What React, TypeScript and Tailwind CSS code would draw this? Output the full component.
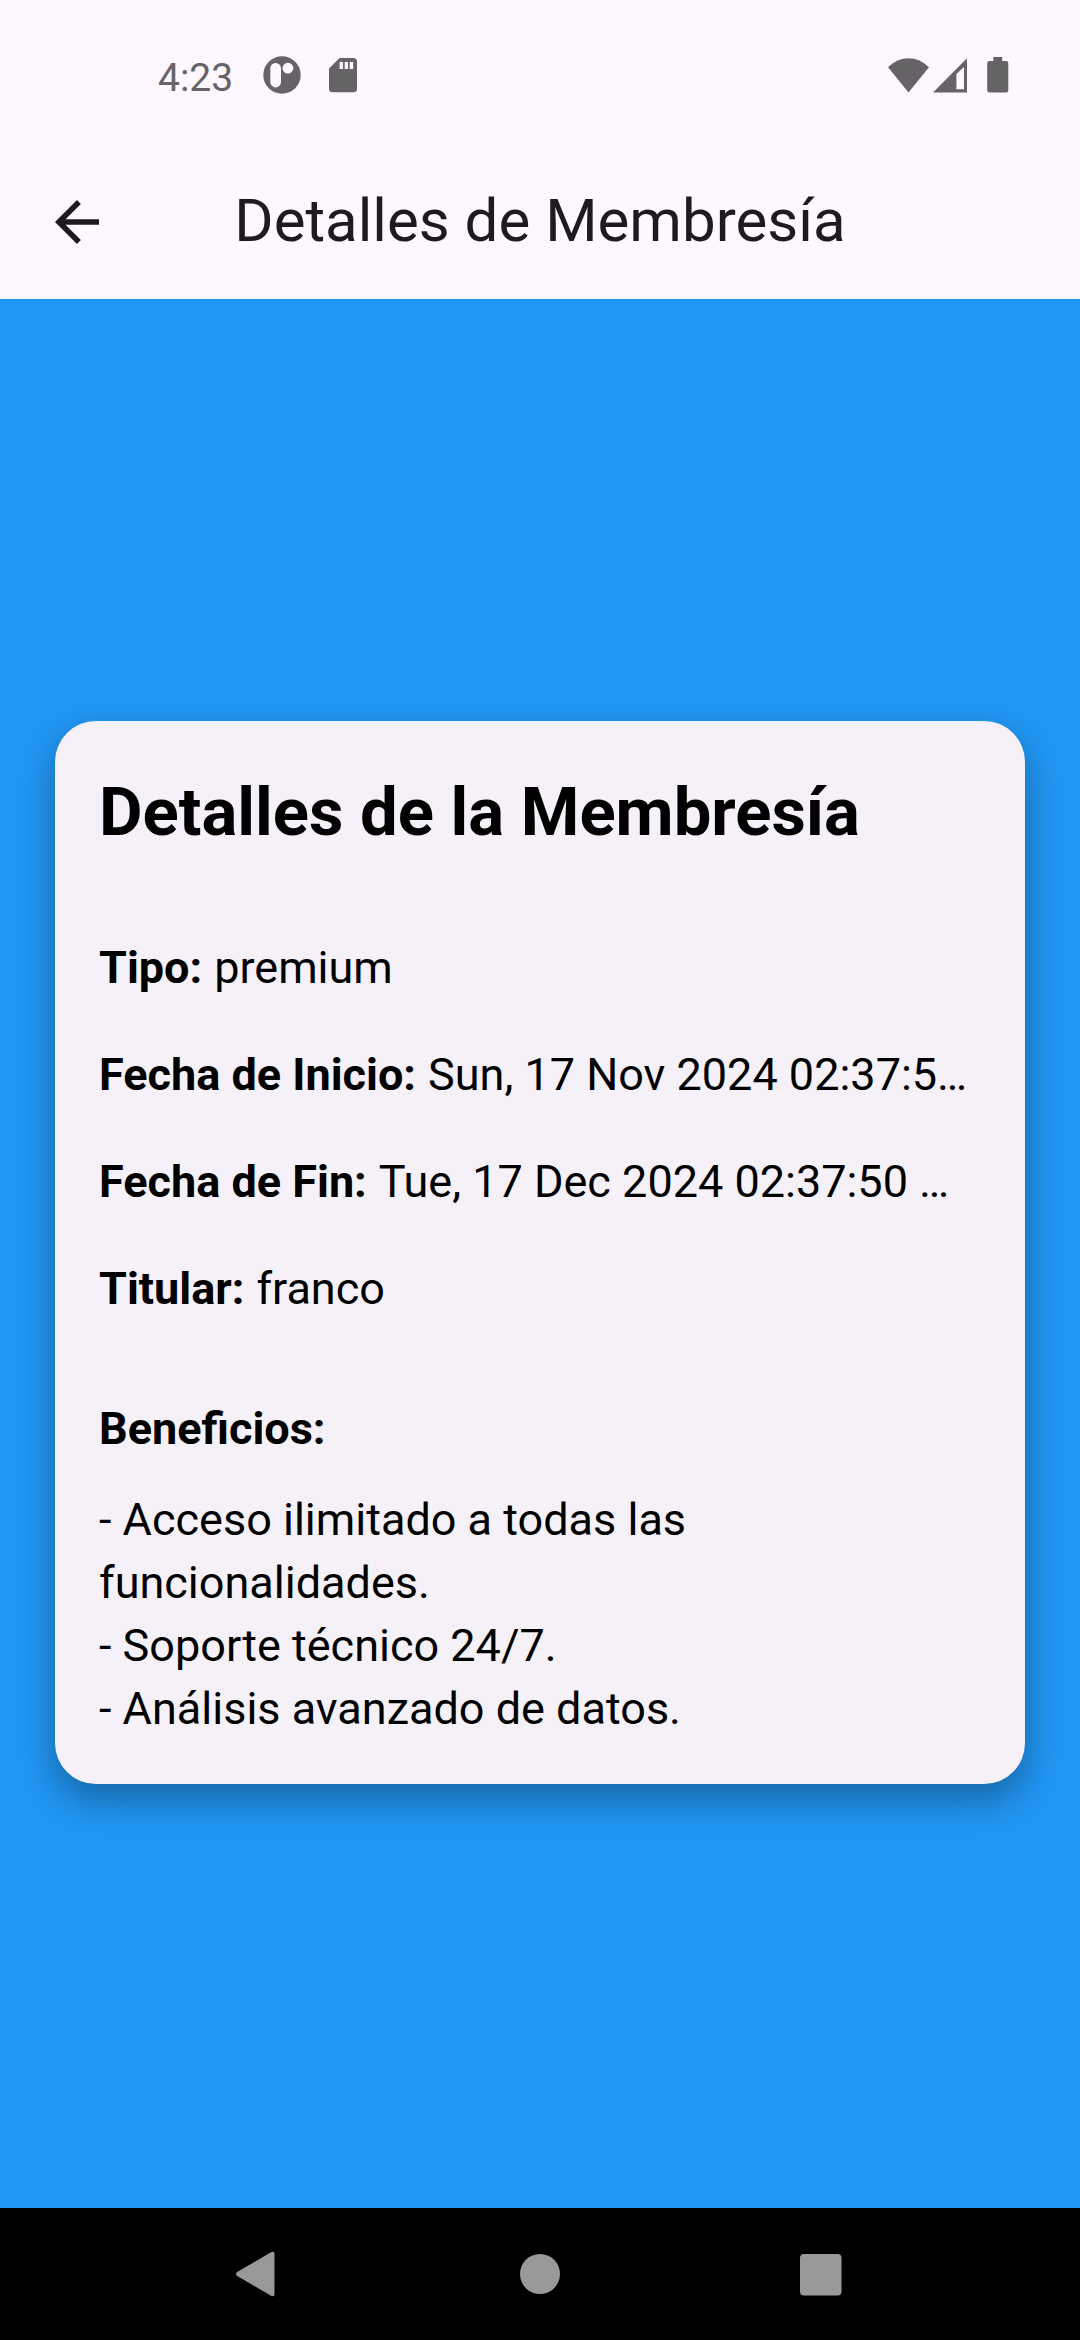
import type { ReactNode } from "react";

const details = [
  { label: "Tipo:", value: "premium" },
  { label: "Fecha de Inicio:", value: "Sun, 17 Nov 2024 02:37:5…" },
  { label: "Fecha de Fin:", value: "Tue, 17 Dec 2024 02:37:50 …" },
  { label: "Titular:", value: "franco" },
];

const benefits = [
  "- Acceso ilimitado a todas las funcionalidades.",
  "- Soporte técnico 24/7.",
  "- Análisis avanzado de datos.",
];

function StatusBar() {
  return (
    <div className="flex h-[145px] items-center justify-between pt-[11px] pr-[71px] pl-[158px] text-[#666367]">
      <div className="flex items-center">
        <span className="text-[39px] leading-none">4:23</span>
        <svg className="ml-[30px] h-11 w-[38px]" viewBox="0 0 38 44" aria-hidden="true">
          <circle cx="19" cy="19" r="18.7" fill="currentColor" />
          <rect x="7.3" y="7" width="10.7" height="24.4" rx="5.3" fill="#fef7ff" />
          <circle cx="24.9" cy="12.2" r="5.4" fill="#fef7ff" />
        </svg>
        <svg className="ml-7 h-11 w-7" viewBox="0 0 28 44" aria-hidden="true">
          <path
            fill="currentColor"
            fillRule="evenodd"
            d="M10.6 2H24.5Q28 2 28 5.5V33Q28 36.3 24.5 36.3H3.5Q0 36.3 0 33V12.6ZM10.6 6V13H14V6ZM15.7 6V13H19V6ZM20.7 6V13H24.2V6Z"
          />
        </svg>
      </div>
      <div className="flex items-center">
        <svg className="h-11 w-[42px]" viewBox="0 0 42 44" aria-hidden="true">
          <path fill="currentColor" d="M0 11.2Q9 2.2 20.5 2.2T41 11.2L20.5 36.5Z" />
        </svg>
        <svg className="ml-[3px] h-11 w-[34px]" viewBox="0 0 34 44" aria-hidden="true">
          <path fill="currentColor" fillRule="evenodd" d="M34 2.3V36.6H0ZM31 11L23.4 18V33.3H31Z" />
        </svg>
        <svg className="ml-5 h-11 w-[22px]" viewBox="0 0 22 44" aria-hidden="true">
          <path
            fill="currentColor"
            d="M6.3 1H15.2V5H19Q21.3 5 21.3 7.3V34.2Q21.3 36.5 19 36.5H2.5Q.2 36.5 .2 34.2V7.3Q.2 5 2.5 5H6.3Z"
          />
        </svg>
      </div>
    </div>
  );
}

function AppBar() {
  return (
    <div className="flex h-[154px] items-center text-[#1d1b20]">
      <button type="button" aria-label="Atrás" className="flex h-full w-[154px] items-center justify-center">
        <svg className="size-[66px]" viewBox="0 0 24 24" fill="currentColor" aria-hidden="true">
          <path d="M20 11H7.83l5.59-5.59L12 4l-8 8 8 8 1.41-1.41L7.83 13H20v-2z" />
        </svg>
      </button>
      <h1 className="flex-1 pr-[154px] pb-[3px] text-center text-[60px] leading-[76px]">Detalles de Membresía</h1>
    </div>
  );
}

function NavButton({ label, children }: { label: string; children: ReactNode }) {
  return (
    <button type="button" aria-label={label} className="flex h-full w-[26%] items-center justify-center">
      <svg className="size-12" viewBox="0 0 48 48" fill="#999999" aria-hidden="true">
        {children}
      </svg>
    </button>
  );
}

function NavigationBar() {
  return (
    <nav className="flex h-[132px] justify-center bg-black">
      <NavButton label="Volver">
        <path d="M2.2 22L36 2.3Q39.5 .8 39.5 4V44Q39.5 47.2 36 45.7L2.2 26Q-.2 24 2.2 22Z" />
      </NavButton>
      <NavButton label="Inicio">
        <circle cx="24" cy="24" r="20" />
      </NavButton>
      <NavButton label="Aplicaciones recientes">
        <rect x="3" y="4" width="41.5" height="41.5" rx="4" />
      </NavButton>
    </nav>
  );
}

export default function App() {
  return (
    <div className="flex min-h-screen flex-col bg-[#2196f3] font-[Roboto,sans-serif]">
      <header className="bg-[#fef7ff]">
        <StatusBar />
        <AppBar />
      </header>

      <main className="flex flex-1 flex-col justify-center px-[55px] pb-[2px]">
        <section className="rounded-[41px] bg-[#f6f1f9] p-11 text-[45px] leading-[63px] text-black shadow-[0_16px_36px_rgba(0,0,0,0.32)]">
          <h2 className="mb-[55px] text-[67px] leading-[94px] font-bold">Detalles de la Membresía</h2>
          <dl>
            {details.map(({ label, value }) => (
              <div key={label} className="flex gap-3 py-[22px]">
                <dt className="shrink-0 font-bold">{label}</dt>
                <dd className="truncate">{value}</dd>
              </div>
            ))}
          </dl>
          <h3 className="mt-[55px] mb-7 font-bold">Beneficios:</h3>
          <ul>
            {benefits.map((benefit) => (
              <li key={benefit}>{benefit}</li>
            ))}
          </ul>
        </section>
      </main>

      <NavigationBar />
    </div>
  );
}
